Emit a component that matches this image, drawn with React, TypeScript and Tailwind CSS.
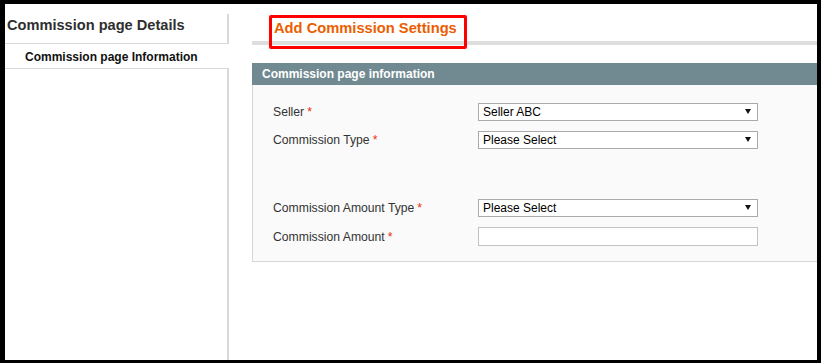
const FIELDS_TOP = [
  { label: "Seller", value: "Seller ABC" },
  { label: "Commission Type", value: "Please Select" },
];

function Label({ text }: { text: string }) {
  return (
    <div className="w-[205px] shrink-0 text-[12.2px] leading-[16px] text-[#333]">
      {text}
      <span className="ml-[3px] text-[#eb340a]">*</span>
    </div>
  );
}

function FakeSelect({ value }: { value: string }) {
  return (
    <div className="relative flex h-[18px] w-[280px] items-center border border-[#aaa] bg-white pl-[4px] text-[12px] leading-[16px] text-black">
      {value}
      <svg
        className="absolute right-[6px] top-[5px]"
        width="6"
        height="5"
        viewBox="0 0 6 5"
      >
        <polygon points="0,0 6,0 3,5" fill="#111" />
      </svg>
    </div>
  );
}

export default function App() {
  return (
    <div
      className="box-border flex h-[363px] w-[821px] border-t-4 border-r-4 border-b-[3px] border-l-[5px] border-black bg-white"
      style={{ fontFamily: '"Liberation Sans", Arial, sans-serif' }}
    >
      {/* Sidebar */}
      <aside className="flex w-[224px] shrink-0 flex-col pt-[10px]">
        <div className="h-[30px] border-r-2 border-b border-[#d9d9d9] pt-[1px] pl-[2px] text-[14.6px] font-bold leading-[20px] text-[#2f2f2f]">
          Commission page Details
        </div>
        <div className="h-[24px] pt-[5px] pl-[20px] text-[12px] font-bold leading-[16px] text-[#111]">
          Commission page Information
        </div>
        <div className="flex-1 border-t border-r-2 border-[#d9d9d9]" />
      </aside>

      {/* Main */}
      <main className="relative flex-1">
        <div className="h-[37px] pt-[14px] pl-[45px] text-[14.7px] font-bold leading-[20px] text-[#eb5e00]">
          Add Commission Settings
        </div>
        <div className="ml-[23px] h-[4px] bg-[#dedede]" />

        <div className="absolute left-[40px] top-[11px] h-[34px] w-[198px] rounded-[2px] border-[3px] border-[#ff0000]" />

        <section className="mt-[18px] ml-[23px]">
          <div className="h-[22px] bg-[#718a91] pl-[10px] text-[12px] font-bold leading-[22px] text-white">
            Commission page information
          </div>
          <div className="flex flex-col border-b border-l border-[#d6d6d6] bg-[#fafafa] pt-[18px] pb-[15px] pl-[20px]">
            {FIELDS_TOP.map((f, i) => (
              <div
                key={f.label}
                className={`flex items-center ${i > 0 ? "mt-[10px]" : ""}`}
              >
                <Label text={f.label} />
                <FakeSelect value={f.value} />
              </div>
            ))}
            <div className="mt-[50px] flex items-center">
              <Label text="Commission Amount Type" />
              <FakeSelect value="Please Select" />
            </div>
            <div className="mt-[10px] flex items-center">
              <Label text="Commission Amount" />
              <div className="h-[19px] w-[280px] border border-[#c2c2c2] bg-white" />
            </div>
          </div>
        </section>
      </main>
    </div>
  );
}
